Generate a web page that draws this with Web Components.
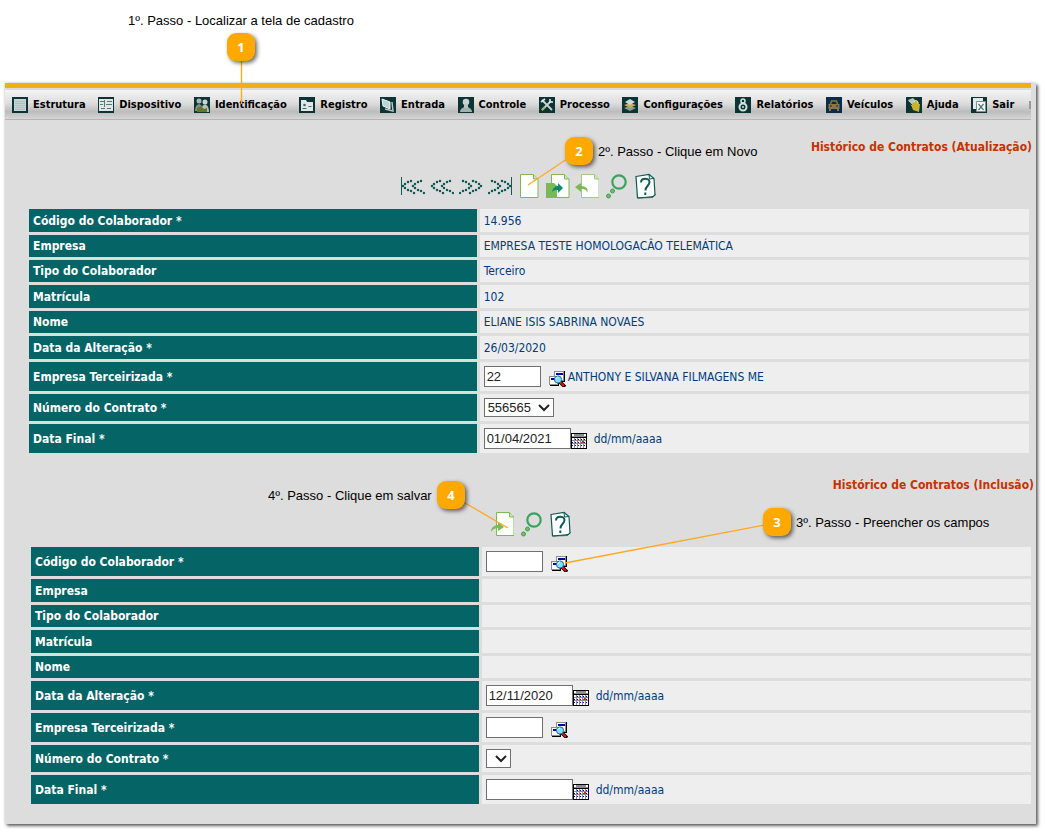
<!DOCTYPE html>
<html lang="pt-BR">
<head>
<meta charset="utf-8">
<title>Histórico de Contratos</title>
<style>
  html, body { margin: 0; background: #fff; }
  body { font: 12px/16px "DejaVu Sans Condensed", "Noto Sans", sans-serif; color: #000; }
</style>
</head>
<body>
<contract-page></contract-page>

<script>
const page = (x, c) => `<path d="M${x} 1.5h13l4.500 4.500v18.500h-17.500z" fill="#fff" stroke="${c}"/><path d="M${x + 13} 1.500v4.500h4.500" fill="#cfe3bb" stroke="${c}"/>`;
const chevrons = (flip) => {
  const arm = [[9,8],[6,9],[3,11],[1,13],[3,15],[6,17],[9,18]];
  const pts = arm.concat(arm.map(([x, y]) => [x + 10, y])).concat([[12, 20], [22, 20]]);
  return pts.map(([x, y]) => `<circle cx="${flip ? 23 - x : x + 1}" cy="${y}" r="1.250"/>`).join('');
};
const help = '<path d="M3 3.500l13-2 5 4 1 16.500-3 2.500-14.500.5z" fill="#fff" stroke="#0f5a56" stroke-width="1.200"/><path d="M16 1.500l.5 4.500 4.500-.5M5 25l15.500-1.500 2-2" fill="none" stroke="#0f5a56"/><path d="M8 9.500c0-5 8.500-5 8.500-.5 0 4-4 3.500-4 8.500M12.300 19.500v2.500" fill="none" stroke="#0f5a56" stroke-width="2"/>';
const dots = (xs, ys) => ys.map(y => xs.map(x => `M${x} ${y}h2v2h-2z`).join('')).join('');
const ICONS = {
  first: [24, 26, `<g fill="#0f5a56"><path d="M0 4h1v18H0z"/>${chevrons(false)}</g>`],
  prev: [24, 26, `<g fill="#0f5a56">${chevrons(false)}</g>`],
  next: [24, 26, `<g fill="#0f5a56">${chevrons(true)}</g>`],
  last: [24, 26, `<g fill="#0f5a56">${chevrons(true)}<path d="M23 4h1v18h-1z"/></g>`],
  new: [24, 26, page(3.5, '#7cb955')],
  copy: [24, 26, `${page(5.5, '#7cb955')}<path d="M0 10h8l3 3v12H0z" fill="#7cb955"/><path d="M6 19c1-5 4-6 6-6v-3l5 5-5 5v-3c-3 0-4 0-6 2z" fill="#0b8a6a"/>`],
  undo: [24, 26, `${page(6.5, '#9fcc80')}<path d="M12 20c0-3-2-4-6-4v3l-6-5 6-4v3c5 0 8 3 6 7z" fill="#7cb955"/>`],
  save: [24, 26, `${page(6.5, '#7cb955')}<path d="M1 21c0-5 4-7 7-7v-3l6 5-6 4v-3c-3 0-5 1-7 4z" fill="#7cb955"/>`],
  find: [24, 26, '<circle cx="15" cy="9" r="6.700" fill="none" stroke="#3aa35d" stroke-width="2.200"/><circle cx="8.500" cy="18" r="2" fill="#7cb955" stroke="#3aa35d"/><circle cx="4.500" cy="23" r="2" fill="#7cb955" stroke="#3aa35d"/>'],
  help: [24, 26, help],
  lookup: [17, 16, '<path d="M6 0h10v11H6z" fill="#000"/><path d="M5 0h10v10H5z" fill="#8c8c8c"/><path d="M6 1h8v8H6z" fill="#fff"/><path d="M7 2h7v2H7z" fill="#0000b4"/><path d="M1 6h9v9H1z" fill="#000"/><path d="M0 5h9v9H0z" fill="#8c8c8c"/><path d="M1 6h7v7H1z" fill="#fff"/><path d="M2 7h6v2H2z" fill="#0000b4"/><path d="M11 11l5 5" stroke="#000" stroke-width="3.500"/><path d="M11 11l4 4" stroke="#e01010" stroke-width="2"/><circle cx="9" cy="8.500" r="3.600" fill="#7fe0fa" stroke="#28648c"/><path d="M7 8c0-1 1-2 2-2" stroke="#fff" fill="none"/>'],
  calendar: [16, 16, `<path d="M0 0h16v16H0z" fill="#000"/><path d="M1 1h14v3H1z" fill="#8c8c8c"/><path d="M1 1h2v2H1zM13 1h2v2h-2z" fill="#fff"/><path d="M1 5h14v10H1z" fill="#8c8c8c"/><path d="${dots([1, 4, 7, 10, 13], [5, 8, 11, 13])}" fill="#fff"/><path d="M4 6h1v1H4zM7 6h1v1H7zM10 6h1v1h-1zM13 6h1v1h-1zM1 9h1v1H1zM4 9h1v1H4zM7 9h1v1H7zM13 9h1v1h-1zM1 12h1v1H1zM4 12h1v1H4zM7 12h1v1H7zM10 12h1v1h-1zM13 12h1v1h-1z" fill="#0000c8"/><path d="M10 9h1V8h2v2h-3z" fill="#f01818"/>`],
  estrutura: [16, 16, '<path fill="#c6d5d3" d="M2 2h12v12H2z"/><path d="M3 4.500h10M3 6.500h10M3 8.500h10M3 10.500h10M3 12.500h10" stroke="#afc1be"/>'],
  dispositivo: [16, 16, '<path fill="#dfe8e6" d="M1 2h14v12H1z"/><path d="M2 4.500h4M9 4.500h5M2 7.500h3M8 7.500h6M3 11.500h4M9 11.500h4M6.500 3v7" stroke="#5d7673"/>'],
  identificacao: [16, 16, '<circle cx="5" cy="4" r="2.500" fill="#a9b8b6"/><path d="M1 14c0-9 8-9 8 0z" fill="#7f9486"/><circle cx="11" cy="5" r="2.500" fill="#cbd6d4"/><path d="M7 15c0-10 8-10 8 0z" fill="#b5c1b8"/><path d="M3 11l4-2 3 3 3-1v4H3z" fill="#66762c"/>'],
  registro: [16, 16, '<path fill="#dfe8e6" d="M2 3h5l1 2h6v9H2z"/><circle cx="5.500" cy="8" r="1.300" fill="#476462"/><path d="M3.500 11.500h4M9.500 9.500h3" stroke="#476462"/>'],
  entrada: [16, 16, '<path d="M2 2l8 3v7l-7-3z" fill="#b7d6d3" stroke="#eef4f3"/><path d="M5 12l4 1 4 1-1-9" fill="none" stroke="#b5c6c4" stroke-width="1.500"/>'],
  controle: [16, 16, '<circle cx="8" cy="5" r="3.300" fill="#c9d3d2"/><path d="M2 15c0-3 3-5 6-5s6 2 6 5z" fill="#a2b0af"/><path d="M6 7h4v4H6z" fill="#b8c4c3"/>'],
  processo: [16, 16, '<path d="M3 13l9-9M3 3l10 10" stroke="#c9d3d2" stroke-width="1.800"/><path d="M2 5l4-3M11 2v3h3" fill="none" stroke="#e3eae9" stroke-width="1.600"/><path d="M3 13l3-3" stroke="#a3b34f" stroke-width="2"/>'],
  configuracoes: [16, 16, '<path d="M2 11l6-2 6 2-6 3z" fill="#8f9b95"/><path d="M2 8l6-2 6 2-6 3z" fill="#c9ae52"/><path d="M3 5l5-3 5 3-5 3z" fill="#c9dbe0"/>'],
  relatorios: [16, 16, '<circle cx="8" cy="10" r="3.500" fill="none" stroke="#d6e0df" stroke-width="2"/><circle cx="8" cy="4" r="2" fill="none" stroke="#d6e0df" stroke-width="1.500"/><circle cx="8" cy="10" r="1" fill="#d6e0df"/>'],
  veiculos: [16, 16, '<path d="M0 0h16v16H0z" fill="#0b2c48"/><path d="M4.500 7l1-3h5l1 3" fill="none" stroke="#8d7643" stroke-width="1.500"/><path d="M2.500 7h11v5h-11zM3 12h2v2H3zM11 12h2v2h-2z" fill="#8d7643"/><path d="M4 9h2M10 9h2" stroke="#0b2c48"/>'],
  ajuda: [16, 16, '<path d="M2 3l5-2 5 5-4 7z" fill="#b7c7bf"/><path d="M5 7l3-1V4h4v3h2l-1 8-6-2z" fill="#c6b32e"/><path d="M8 5c1-3 5-1 4 2" fill="none" stroke="#eef0d8"/><path d="M3 5l3 3" stroke="#173c3b"/>'],
  sair: [16, 16, '<path d="M2 1h10v11H2z" fill="#e2e9e8"/><path d="M5.500 4.500h9v10h-9z" fill="#f2f5f5" stroke="#7b9290"/><path d="M7.500 7l5 6M12.500 7l-5 6" stroke="#577370" stroke-width="1.200"/>']
};

const define = (name, html, setup) => {
  const template = document.createElement('template');
  template.innerHTML = html;
  customElements.define(name, class extends HTMLElement {
    constructor() {
      super();
      this.attachShadow({ mode: 'open' }).append(template.content.cloneNode(true));
    }
    connectedCallback() {
      if (setup && !this.ready) { this.ready = true; setup(this, this.shadowRoot); }
    }
  });
};

define('app-icon', '<style>:host { display: block; flex: none; } svg { display: block; }</style>', (host, root) => {
  const [w, h, art] = ICONS[host.getAttribute('name')];
  root.innerHTML += `<svg width="${w}" height="${h}" viewBox="0 0 ${w} ${h}" aria-hidden="true">${art}</svg>`;
});

define('menu-item', `
  <style>
    :host { display: block; }
    a { display: flex; align-items: center; gap: 5px; color: #000; font-weight: 700; text-decoration: none; white-space: nowrap; }
    app-icon { background: #0c3434; }
  </style>
  <a href="#"><slot></slot></a>`, (host, root) => {
  const icon = document.createElement('app-icon');
  icon.setAttribute('name', host.getAttribute('icon'));
  root.querySelector('a').prepend(icon);
});

define('menu-bar', `
  <style>
    :host { display: block; margin-right: 5px; border-top: 5px solid #efb012; font-size: 11px; }
    nav {
      display: flex; align-items: center; justify-content: space-between;
      height: 28px; padding: 1px 0 0 7px; border-bottom: 1px solid #b4b4b4; border-top: 2px solid #dcdce0;
      background: linear-gradient(#f4f4f4, #dedede 45%, #bcbcbc 75%, #d6d6d6);
    }
    nav::after { content: ""; width: 2px; height: 8px; margin-left: 2px; background: #999; }
  </style>
  <nav aria-label="Menu principal"><slot></slot></nav>`);

define('section-title', `
  <style>
    :host { display: block; text-align: right; }
    h2 { margin: 0; font-size: inherit; line-height: 16px; font-weight: 700; color: #c83200; }
  </style>
  <h2><slot></slot></h2>`);

define('tool-bar', `
  <style>
    :host { display: flex; justify-content: center; gap: 5px; height: 26px; }
  </style>
  <slot></slot>`);

define('tool-button', `
  <style>
    :host { display: block; }
    button { display: block; padding: 0; border: 0; background: none; }
  </style>
  <button type="button"></button>`, (host, root) => {
  const button = root.querySelector('button');
  button.setAttribute('aria-label', host.getAttribute('label'));
  button.innerHTML = `<app-icon name="${host.getAttribute('icon')}"></app-icon>`;
});

const RECORDS = {
  update: [
    ['Código do Colaborador *', 'text', '14.956', 23],
    ['Empresa', 'text', 'EMPRESA TESTE HOMOLOGACÂO TELEMÁTICA', 22],
    ['Tipo do Colaborador', 'text', 'Terceiro', 22],
    ['Matrícula', 'text', '102', 23],
    ['Nome', 'text', 'ELIANE ISIS SABRINA NOVAES', 22],
    ['Data da Alteração *', 'text', '26/03/2020', 23],
    ['Empresa Terceirizada *', 'lookup', '22', 29, 'ANTHONY E SILVANA FILMAGENS ME'],
    ['Número do Contrato *', 'select', '556565', 27],
    ['Data Final *', 'date', '01/04/2021', 29]
  ],
  insert: [
    ['Código do Colaborador *', 'lookup', '', 29, ''],
    ['Empresa', 'text', '', 23],
    ['Tipo do Colaborador', 'text', '', 22],
    ['Matrícula', 'text', '', 23],
    ['Nome', 'text', '', 22],
    ['Data da Alteração *', 'date', '12/11/2020', 29],
    ['Empresa Terceirizada *', 'lookup', '', 29, ''],
    ['Número do Contrato *', 'select', '', 27],
    ['Data Final *', 'date', '', 29]
  ]
};

const CONTROLS = {
  text: (id, value) => value,
  lookup: (id, value, note) => `<div class="field"><input id="${id}" class="code" value="${value}"><button type="button" class="find" aria-label="Pesquisar"><app-icon name="lookup"></app-icon></button><span>${note}</span></div>`,
  select: (id, value) => `<div class="field"><div class="pick"><select id="${id}"${value ? '' : ' class="empty"'}><option>${value}</option></select><svg width="12" height="8" viewBox="0 0 12 8" aria-hidden="true"><path d="M1 1l5 5 5-5" fill="none" stroke="#222" stroke-width="2"/></svg></div></div>`,
  date: (id, value) => `<div class="field"><input id="${id}" class="date" value="${value}"><button type="button" class="cal" aria-label="Calendário"><app-icon name="calendar"></app-icon></button><span class="hint">dd/mm/aaaa</span></div>`
};

define('record-table', `
  <style>
    :host { display: block; }
    table { width: 100%; table-layout: fixed; border-collapse: separate; border-spacing: 3px; }
    th, td { padding: 0 4px; vertical-align: middle; line-height: 16px; }
    th { width: 44.9%; box-sizing: border-box; background: #046466; color: #fff; font-weight: 700; text-align: left; }
    td { background: #eee; color: #003c7d; }
    .field { display: flex; align-items: center; }
    input, select {
      box-sizing: border-box; margin: 0; border: 1px solid #707070; border-radius: 0; background: #fff;
      color: #222; font: 13px/16px "Liberation Sans", Arial, sans-serif;
    }
    input { height: 21px; padding: 0 2px; }
    .code { width: 57px; }
    .date { width: 87px; }
    button { padding: 0; border: 0; background: none; }
    .find { margin: 5px 2px 0 8px; }
    .cal { margin-top: 5px; }
    .hint { margin-left: 7px; }
    .pick { display: grid; align-items: center; justify-items: end; }
    .pick > * { grid-area: 1 / 1; }
    .pick svg { margin-right: 4px; pointer-events: none; }
    select { appearance: none; width: 70px; height: 19px; padding: 0 3px; }
    select.empty { width: 25px; }
  </style>
  <table><tbody></tbody></table>`, (host, root) => {
  const rows = RECORDS[host.getAttribute('record')];
  root.querySelector('tbody').innerHTML = rows.map(([label, kind, value, height, note], i) => {
    const id = `field-${i}`;
    const caption = kind === 'text' ? label : `<label for="${id}">${label}</label>`;
    return `<tr style="height:${height}px"><th scope="row">${caption}</th><td>${CONTROLS[kind](id, value, note)}</td></tr>`;
  }).join('');
});

define('step-badge', `
  <style>
    :host {
      display: grid; place-items: center; width: 28px; height: 28px; border-radius: 9px;
      background: #ffa800; color: #fff; font: 700 13px/16px "Noto Sans", sans-serif; box-shadow: 2px 2px 4px #0009;
    }
  </style>
  <slot></slot>`);

define('step-note', `
  <style>
    :host { display: block; font: 13px/16px "Liberation Sans", Arial, sans-serif; color: #000; white-space: nowrap; }
  </style>
  <slot></slot>`);

define('app-window', `
  <style>
    :host { display: block; background: #ddd; box-shadow: 2px 2px 3px #0009, 0 0 3px #0003; }
  </style>
  <slot></slot>`);

define('contract-page', `
  <style>
    :host { display: block; position: relative; padding: 83px 9px 8px 5px; }
    .update { padding: 19px 4px 0 21px; }
    .insert { padding: 21px 2px 17px 23px; }
    tool-bar { margin: 18px 0 7px; }
    .lines { position: absolute; left: 0; top: 0; pointer-events: none; }
    step-badge, step-note { position: absolute; }
    .b1 { left: 227px; top: 33px; }  .n1 { left: 128px; top: 13px; }
    .b2 { left: 565px; top: 137px; } .n2 { left: 598px; top: 144px; }
    .b3 { left: 763px; top: 508px; } .n3 { left: 796px; top: 515px; }
    .b4 { left: 437px; top: 481px; } .n4 { left: 268px; top: 488px; }
  </style>
  <app-window>
    <menu-bar>
      <menu-item icon="estrutura">Estrutura</menu-item>
      <menu-item icon="dispositivo">Dispositivo</menu-item>
      <menu-item icon="identificacao">Identificação</menu-item>
      <menu-item icon="registro">Registro</menu-item>
      <menu-item icon="entrada">Entrada</menu-item>
      <menu-item icon="controle">Controle</menu-item>
      <menu-item icon="processo">Processo</menu-item>
      <menu-item icon="configuracoes">Configurações</menu-item>
      <menu-item icon="relatorios">Relatórios</menu-item>
      <menu-item icon="veiculos">Veículos</menu-item>
      <menu-item icon="ajuda">Ajuda</menu-item>
      <menu-item icon="sair">Sair</menu-item>
    </menu-bar>
    <section class="update">
      <section-title>Histórico de Contratos (Atualização)</section-title>
      <tool-bar>
        <tool-button icon="first" label="Primeiro"></tool-button>
        <tool-button icon="prev" label="Anterior"></tool-button>
        <tool-button icon="next" label="Próximo"></tool-button>
        <tool-button icon="last" label="Último"></tool-button>
        <tool-button icon="new" label="Novo"></tool-button>
        <tool-button icon="copy" label="Copiar"></tool-button>
        <tool-button icon="undo" label="Voltar"></tool-button>
        <tool-button icon="find" label="Pesquisar"></tool-button>
        <tool-button icon="help" label="Ajuda"></tool-button>
      </tool-bar>
      <record-table record="update"></record-table>
    </section>
    <section class="insert">
      <section-title>Histórico de Contratos (Inclusão)</section-title>
      <tool-bar>
        <tool-button icon="save" label="Salvar"></tool-button>
        <tool-button icon="find" label="Pesquisar"></tool-button>
        <tool-button icon="help" label="Ajuda"></tool-button>
      </tool-bar>
      <record-table record="insert"></record-table>
    </section>
  </app-window>
  <svg class="lines" width="800" height="600" viewBox="0 0 800 600" fill="none" stroke="#ffa81e" stroke-width="1.300" aria-hidden="true">
    <path d="M241.500 60V104M570 157L528 185M770 524L565 563M460 500L508 528"/>
  </svg>
  <step-note class="n1">1º. Passo - Localizar a tela de cadastro</step-note><step-badge class="b1">1</step-badge>
  <step-note class="n2">2º. Passo - Clique em Novo</step-note><step-badge class="b2">2</step-badge>
  <step-note class="n3">3º. Passo - Preencher os campos</step-note><step-badge class="b3">3</step-badge>
  <step-note class="n4">4º. Passo - Clique em salvar</step-note><step-badge class="b4">4</step-badge>`);
</script>
</body>
</html>
